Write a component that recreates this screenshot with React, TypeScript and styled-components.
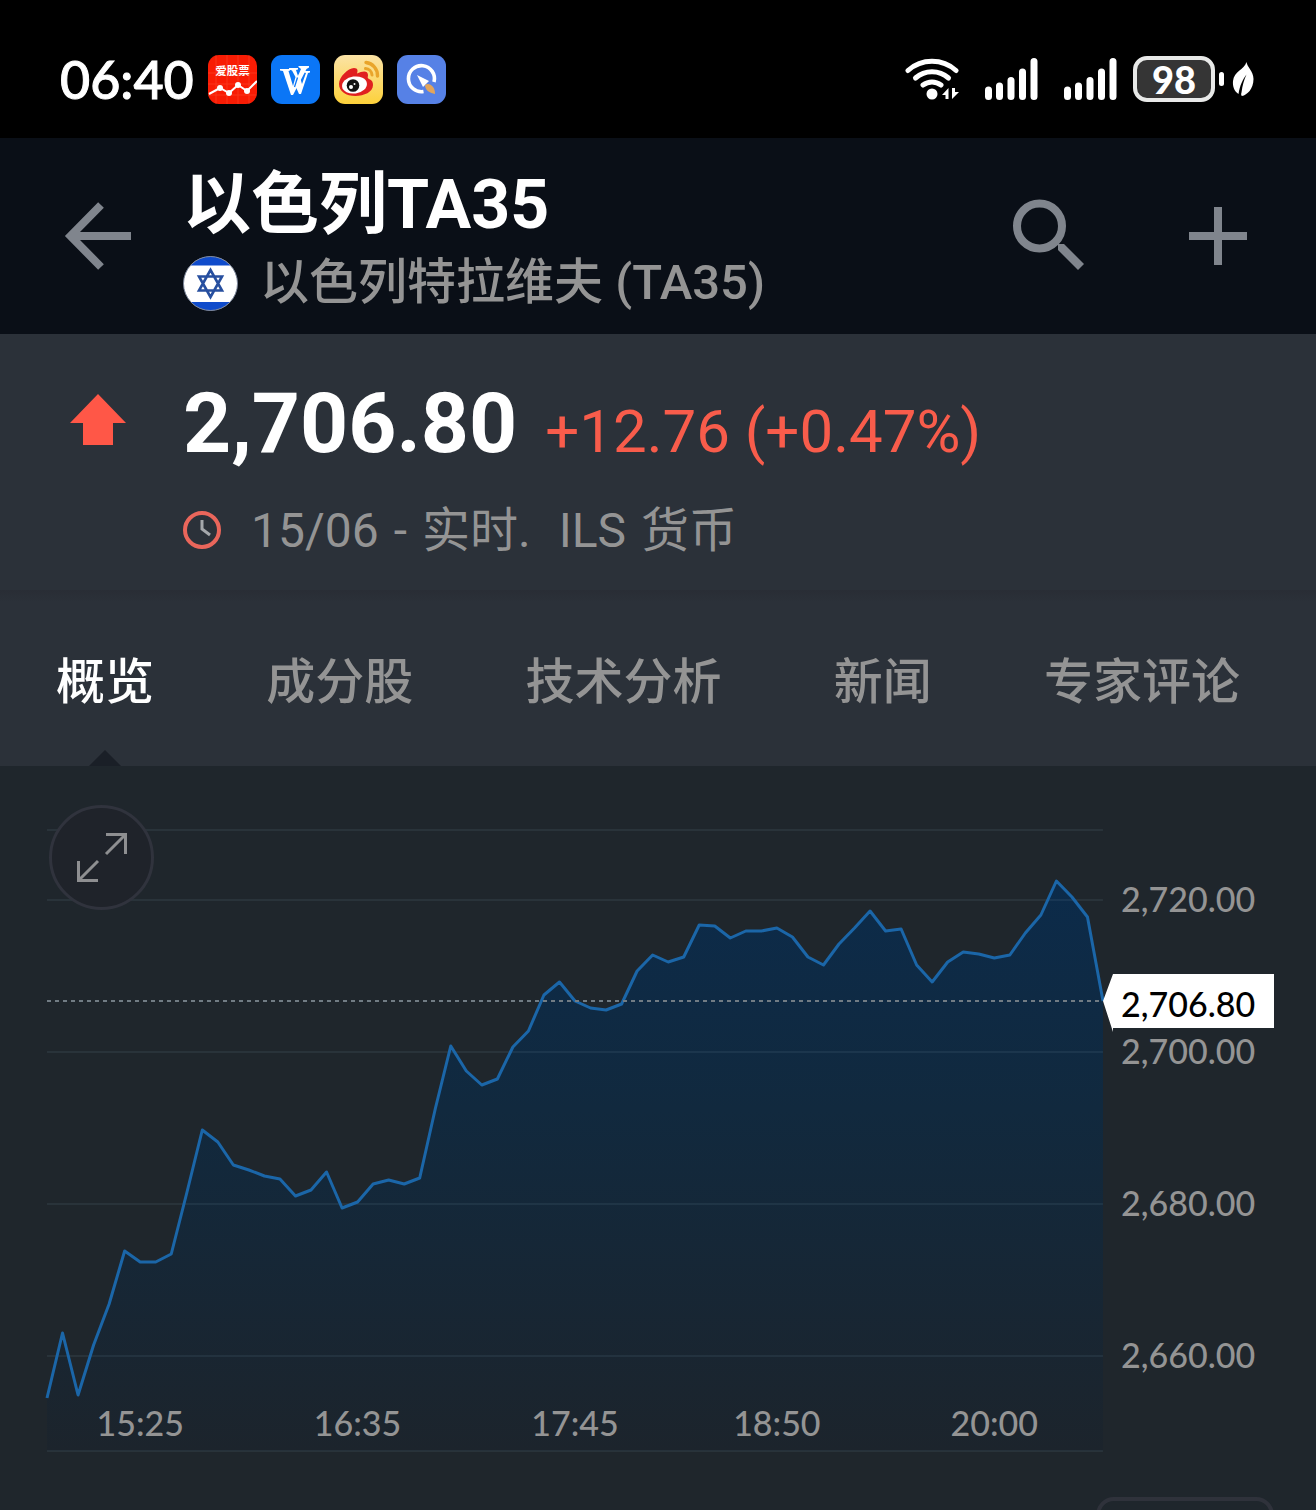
import React from 'react';
import styled, { createGlobalStyle } from 'styled-components';

const uiFont = `Roboto, "Noto Sans CJK SC", sans-serif`;
const numFont = `Lato, "Noto Sans CJK SC", sans-serif`;

const color = {
  header: '#0a0f17',
  panel: '#2b3139',
  chart: '#1f262c',
  grid: '#7391a5',
  muted: '#949494',
  icon: '#80858d',
  up: '#f85c4b',
  line: '#1b66a8',
};

const GlobalStyle = createGlobalStyle`
  *, *::before, *::after { box-sizing: border-box; }
  body { margin: 0; background: ${color.chart}; }
  button { font: inherit; color: inherit; background: none; border: 0; padding: 0; cursor: pointer; }
  svg { display: block; flex: none; }
`;

const Screen = styled.div`
  display: flex;
  flex-direction: column;
  height: 100vh;
  overflow: hidden;
  background: ${color.chart};
  color: #fff;
  font-family: ${uiFont};
`;

const StatusBar = styled.div`
  display: flex;
  flex: none;
  align-items: center;
  justify-content: space-between;
  height: 138px;
  padding: 20px 62px 0 60px;
  background: #000;
`;

const StatusGroup = styled.div<{ $gap: number }>`
  display: flex;
  align-items: center;
  gap: ${p => p.$gap}px;
`;

const Clock = styled.time`
  font: 500 52px/60px ${numFont};
  -webkit-text-stroke: 1px #fff;
`;

const Battery = styled.div`
  display: flex;
  align-items: center;
  gap: 4px;
  &::after {
    content: '';
    width: 5px;
    height: 14px;
    border-radius: 3px;
    background: #fff;
  }
`;

const BatteryLevel = styled.span`
  width: 82px;
  height: 46px;
  border: 4px solid #e8e9e8;
  border-radius: 14px;
  background: #353535;
  font: 900 38px/38px ${numFont};
  text-align: center;
`;

const Header = styled.header`
  display: flex;
  flex: none;
  align-items: center;
  height: 196px;
  padding: 0 68px 0 64px;
  background: ${color.header};
`;

const IconButton = styled.button`
  display: flex;
  align-items: center;
  justify-content: center;
  flex: none;
`;

const Titles = styled.div`
  flex: 1;
  margin-left: 51px;
  padding-top: 10px;
`;

const Title = styled.h1`
  margin: 0;
  font-size: 68px;
  line-height: 84px;
  font-weight: 700;
`;

const Subtitle = styled.div`
  display: flex;
  align-items: center;
  gap: 22px;
  color: ${color.muted};
  font-size: 49px;
  line-height: 72px;
  font-weight: 500;
`;

const Actions = styled.div`
  display: flex;
  align-items: center;
  gap: 102px;
`;

const Quote = styled.section`
  display: grid;
  grid-template-columns: 58px 1fr;
  column-gap: 56px;
  flex: none;
  height: 256px;
  padding: 34px 68px 0 69px;
  background: ${color.panel};
`;

const Direction = styled.div`
  padding-top: 24px;
`;

const PriceRow = styled.div`
  display: flex;
  align-items: baseline;
  gap: 28px;
`;

const Price = styled.strong`
  font-size: 84px;
  line-height: 112px;
  font-weight: 700;
`;

const Change = styled.span`
  color: ${color.up};
  font-size: 60px;
`;

const Session = styled.div`
  display: flex;
  align-items: center;
  gap: 28px;
  color: ${color.muted};
  font-size: 48px;
  line-height: 72px;
  margin-top: 15px;
`;

const Words = styled.span`
  display: flex;
  gap: 15px;
`;

const Tabs = styled.nav`
  display: flex;
  flex: none;
  justify-content: space-between;
  height: 176px;
  padding: 0 76px 0 56px;
  background: linear-gradient(#292d35, ${color.panel} 12px);
`;

const Tab = styled.button<{ $active?: boolean }>`
  position: relative;
  color: ${p => (p.$active ? '#fff' : color.muted)};
  font-size: 49px;
  line-height: 72px;
  font-weight: 500;
  padding-top: 10px;
  &::after {
    content: '';
    display: ${p => (p.$active ? 'block' : 'none')};
    position: absolute;
    bottom: 0;
    left: 50%;
    margin-left: -16px;
    border: 16px solid transparent;
    border-top-width: 0;
    border-bottom-color: #1a1f27;
  }
`;

const ChartSection = styled.section`
  position: relative;
  display: grid;
  grid-template-columns: 1fr 171px;
  flex: none;
  padding: 63px 42px 45px 47px;
`;

const Plot = styled.div`
  display: flex;
  flex-direction: column;
  height: 623px;
`;

const PlotSvg = styled.svg`
  width: 100%;
  height: 570px;
  overflow: visible;
`;

const TimeAxis = styled.div`
  display: grid;
  grid-template-columns: 12fr 16fr 12fr 14fr 14fr;
  height: 48px;
  color: ${color.muted};
  font: 500 34px/48px ${numFont};
  text-align: center;
  z-index: 1;
`;

const PriceAxis = styled.div`
  position: relative;
  display: flex;
  flex-direction: column;
  gap: 112px;
  padding: 50px 0 0 18px;
  color: ${color.muted};
  font: 500 34px/40px ${numFont};
`;

const PriceTag = styled.output`
  position: absolute;
  top: 145px;
  left: 0;
  right: 0;
  height: 58px;
  padding-left: 18px;
  background: #fff;
  clip-path: polygon(0 27px, 10px 0, 100% 0, 100% 54px, 10px 54px, 10px 58px);
  color: #000;
  line-height: 60px;
`;

const ExpandButton = styled(IconButton)`
  position: absolute;
  top: 39px;
  left: 49px;
  width: 105px;
  height: 105px;
  border: 3px solid #30333d;
  border-radius: 50%;
  background: #1f232a;
`;

const Footer = styled.div`
  display: flex;
  flex: none;
  justify-content: flex-end;
  padding: 0 42px;
`;

const RangeButton = styled.button`
  width: 178px;
  height: 80px;
  border: 4px solid #2f323b;
  border-radius: 18px;
`;

const StockIcon = () => (
  <svg width="49" height="49" viewBox="0 0 49 49">
    <rect width="49" height="49" rx="11" fill="#f81c04" />
    <path d="M8 0V49M19 0V49M30 0V49M41 0V49M0 18H49M0 29H49M0 40H49" stroke="#ff5a3c" strokeWidth="1" opacity=".4" />
    <text x="24.5" y="20" textAnchor="middle" fontSize="11.5" fontWeight="700" fill="#fff" fontFamily="Noto Sans CJK SC, sans-serif">爱股票</text>
    <path d="M1 39L12 33L21 38L30 30L39 36L49 26" fill="none" stroke="#fff" strokeWidth="2" />
    <g fill="#fff"><circle cx="12" cy="33" r="3" /><circle cx="21" cy="38" r="3" /><circle cx="30" cy="30" r="3" /><circle cx="39" cy="36" r="3" /></g>
  </svg>
);

const WIcon = () => (
  <svg width="49" height="49" viewBox="0 0 49 49">
    <rect width="49" height="49" rx="11" fill="#0b76f6" />
    <g fill="#fff">
      <path d="M9 14H19V15.500L17.500 16L22 31L24.500 22L21 15.500L18 14.500V13H27V14.500L25 15L27 21L30 14L27.500 12V11H38V12.500L35.500 14L22 40H20L12 16L9 15.500Z" />
      <path d="M28 19L31 29L35 18L32 17V16H39V17.500L37 18L30 39H28L24 30Z" />
    </g>
    <path d="M26.500 22.500L23.500 32" stroke="#0b76f6" strokeWidth="1.300" />
  </svg>
);

const WeiboIcon = () => (
  <svg width="49" height="49" viewBox="0 0 49 49">
    <defs>
      <linearGradient id="weibo" x1="0" y1="0" x2="0" y2="1"><stop stopColor="#fbe3a6" /><stop offset="1" stopColor="#fdd13a" /></linearGradient>
    </defs>
    <rect width="49" height="49" rx="11" fill="url(#weibo)" />
    <path d="M32 7.500A13 13 0 0 1 43.500 21" fill="none" stroke="#e9a52b" strokeWidth="3.400" strokeLinecap="round" />
    <path d="M31.500 13.500A7 7 0 0 1 38 20" fill="none" stroke="#e9a52b" strokeWidth="3" strokeLinecap="round" />
    <path d="M5 29C5 22 14 13 20 13C24 13 24 16 23 18.500C28 16 34 15 34 20C34 22 33 23 35 24C38 25 39 27 39 30C39 37 30 41 21.500 41C12 41 5 36.500 5 29Z" fill="#e02020" />
    <ellipse cx="20.500" cy="30" rx="12.500" ry="8.500" fill="#fff" transform="rotate(-8 20.500 30)" />
    <circle cx="19" cy="30.500" r="6.300" fill="#111" />
    <circle cx="17" cy="32" r="2" fill="#fff" /><circle cx="20.500" cy="29" r="1" fill="#fff" />
  </svg>
);

const BrowserIcon = () => (
  <svg width="49" height="49" viewBox="0 0 49 49">
    <rect width="49" height="49" rx="11" fill="#5681e6" />
    <path d="M26.500 36.500A13 13 0 1 1 37 27" fill="none" stroke="#fff" strokeWidth="3.600" />
    <path d="M20 20L32 26L26 32Z" fill="#fff" />
    <path d="M28 31C28 29 31 28 34 30C37 32 38 35 38 39C33 38 29 36 28 31Z" fill="#e2a55b" />
  </svg>
);

const WifiIcon = () => (
  <svg width="54" height="44" viewBox="0 0 54 44">
    <g fill="none" stroke="#fff" strokeWidth="5" strokeLinecap="round">
      <path d="M3 13.500A36 36 0 0 1 51 13.500" /><path d="M10.500 21A25 25 0 0 1 43.500 21" /><path d="M18 28A15 15 0 0 1 36 28" />
    </g>
    <circle cx="27" cy="37" r="5.500" fill="#fff" />
    <path d="M43.500 31V42H40.500V38H37ZM47 42V31H50V35H54Z" fill="#fff" />
  </svg>
);

const SignalIcon = () => (
  <svg width="53" height="42" viewBox="0 0 53 42">
    <path d="M3.500 32V38.500M14.500 28V38.500M26 22.500V38.500M37.500 14V38.500M49 3.500V38.500" stroke="#fff" strokeWidth="7" strokeLinecap="round" />
  </svg>
);

const LeafIcon = () => (
  <svg width="22" height="34" viewBox="0 0 22 34">
    <path d="M14.500 0C15 5 21.500 9 21.500 17C21.500 27 15 33 10 34C9 33.500 9 32 9.500 30.500C10.500 23 12 18 14.500 12.500C10.500 18 8 23 6.500 32C2 29 .5 24 1 19C2 9 12 8 14.500 0Z" fill="#fff" />
  </svg>
);

const FlagIcon = () => (
  <svg width="55" height="55" viewBox="0 0 55 55">
    <defs><clipPath id="flag"><circle cx="27.500" cy="27.500" r="27" /></clipPath></defs>
    <g clipPath="url(#flag)">
      <rect width="55" height="55" fill="#fff" /><rect width="55" height="9.500" fill="#0f4bcb" /><rect y="46" width="55" height="9" fill="#0f4bcb" />
    </g>
    <path d="M27.500 14L39 34.500H16ZM27.500 41L16 20.500H39Z" fill="none" stroke="#274f9f" strokeWidth="2.600" />
    <circle cx="27.500" cy="27.500" r="27" fill="none" stroke="#7d879b" strokeWidth="1" />
  </svg>
);

// Heights of the five-minute samples, measured down from the top grid line.
const samples = [
  569, 504, 566, 516, 475, 422, 433, 433, 425, 364, 301, 313, 336, 341, 347, 350, 367, 361, 343, 379, 373, 355, 351,
  355, 349, 280, 217, 242, 256, 250, 218, 202, 166, 153, 172, 179, 181, 175, 142, 126, 133, 128, 96, 97, 109, 102, 102,
  99, 108, 128, 136, 115, 99, 82, 102, 100, 136, 153, 133, 123, 125, 129, 126, 104, 86, 52, 68, 88, 172,
];
const points = samples.map((y, i) => `${i},${y}`).join(' ');
const gridLines = [1, 71, 223, 375, 527, 622];
const times = ['15:25', '16:35', '17:45', '18:50', '20:00'];
const prices = ['2,720.00', '2,700.00', '2,680.00', '2,660.00'];
const tabs = ['概览', '成分股', '技术分析', '新闻', '专家评论'];

export default function App() {
  return (
    <Screen>
      <GlobalStyle />
      <StatusBar>
        <StatusGroup $gap={14}>
          <Clock>06:40</Clock>
          <StockIcon />
          <WIcon />
          <WeiboIcon />
          <BrowserIcon />
        </StatusGroup>
        <StatusGroup $gap={16}>
          <StatusGroup $gap={26}>
            <WifiIcon />
            <SignalIcon />
            <SignalIcon />
          </StatusGroup>
          <StatusGroup $gap={8}>
            <Battery>
              <BatteryLevel>98</BatteryLevel>
            </Battery>
            <LeafIcon />
          </StatusGroup>
        </StatusGroup>
      </StatusBar>

      <Header>
        <IconButton aria-label="返回">
          <svg width="68" height="68" viewBox="0 0 68 68">
            <path d="M67 34H7M37 3L6.500 34L37 65" fill="none" stroke={color.icon} strokeWidth="8" />
          </svg>
        </IconButton>
        <Titles>
          <Title>以色列TA35</Title>
          <Subtitle>
            <FlagIcon />
            以色列特拉维夫 (TA35)
          </Subtitle>
        </Titles>
        <Actions>
          <IconButton aria-label="搜索">
            <svg width="74" height="74" viewBox="0 0 74 74">
              <circle cx="27.500" cy="27" r="22.500" fill="none" stroke={color.icon} strokeWidth="8" />
              <path d="M46 45H52L72 65L66 71L46 51Z" fill={color.icon} />
            </svg>
          </IconButton>
          <IconButton aria-label="添加">
            <svg width="60" height="60" viewBox="0 0 60 60">
              <path d="M1 30H59M30 1V59" stroke={color.icon} strokeWidth="8" />
            </svg>
          </IconButton>
        </Actions>
      </Header>

      <Quote>
        <Direction>
          <svg width="58" height="54" viewBox="0 0 58 54">
            <path d="M29 2L57 31H44V53H14V31H1Z" fill="#ff5747" />
          </svg>
        </Direction>
        <div>
          <PriceRow>
            <Price>2,706.80</Price>
            <Change>+12.76 (+0.47%)</Change>
          </PriceRow>
          <Session>
            <svg width="40" height="40" viewBox="0 0 40 40">
              <circle cx="19" cy="19" r="17" fill="none" stroke="#ea665b" strokeWidth="4" />
              <path d="M19 9V18L27 24" fill="none" stroke="#a5a8ac" strokeWidth="3" />
            </svg>
            <Words>
              <span>15/06</span>
              <span>-</span>
              <span>实时.</span>
            </Words>
            <Words>
              <span>ILS</span>
              <span>货币</span>
            </Words>
          </Session>
        </div>
      </Quote>

      <Tabs>
        {tabs.map((t, i) => (
          <Tab key={t} $active={i === 0}>{t}</Tab>
        ))}
      </Tabs>

      <ChartSection>
        <Plot>
          <PlotSvg viewBox="0 0 68 570" preserveAspectRatio="none">
            <defs>
              <linearGradient id="area" gradientUnits="userSpaceOnUse" x1="0" y1="52" x2="0" y2="622">
                <stop stopColor="#0c2b4a" />
                <stop offset=".4" stopColor="#11293e" />
                <stop offset="1" stopColor="#1c242c" />
              </linearGradient>
            </defs>
            <polygon points={`0,622 ${points} 68,622`} fill="url(#area)" />
            {gridLines.map(y => (
              <line key={y} x1="0" x2="68" y1={y} y2={y} stroke={color.grid} strokeOpacity=".12" strokeWidth="2" vectorEffect="non-scaling-stroke" />
            ))}
            <polyline points={points} fill="none" stroke={color.line} strokeWidth="3" strokeLinejoin="round" vectorEffect="non-scaling-stroke" />
            <line x1="0" x2="68" y1="172" y2="172" stroke="#717c84" strokeWidth="2" strokeDasharray="4 4" vectorEffect="non-scaling-stroke" />
          </PlotSvg>
          <TimeAxis>
            {times.map(t => <span key={t}>{t}</span>)}
          </TimeAxis>
        </Plot>
        <PriceAxis>
          {prices.map(p => <span key={p}>{p}</span>)}
          <PriceTag>2,706.80</PriceTag>
        </PriceAxis>
        <ExpandButton aria-label="全屏">
          <svg width="52" height="52" viewBox="0 0 52 52">
            <path d="M30 2.500H49.500V22M49 3L30 22M2.500 29V48.500H22M3 48L22 29" fill="none" stroke="#8e8f91" strokeWidth="3" />
          </svg>
        </ExpandButton>
      </ChartSection>

      <Footer>
        <RangeButton aria-label="图表设置" />
      </Footer>
    </Screen>
  );
}
